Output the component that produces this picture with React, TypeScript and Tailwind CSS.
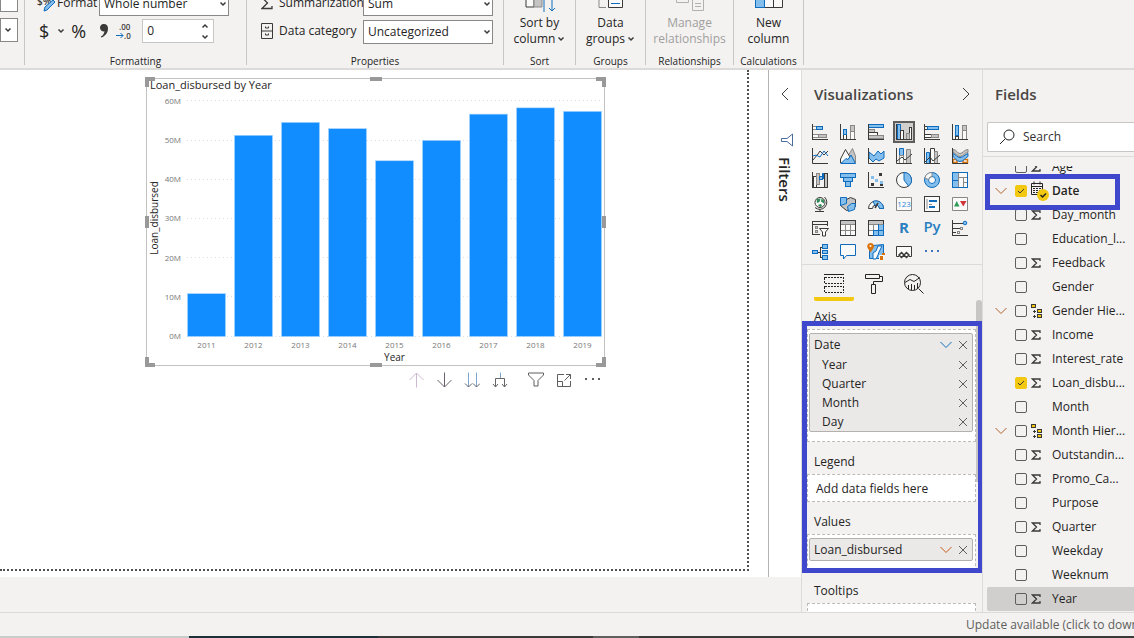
import type { ReactNode } from 'react'
import { clsx } from 'clsx'

const loans = [
  { year: '2011', value: 10.8 },
  { year: '2012', value: 51.2 },
  { year: '2013', value: 54.5 },
  { year: '2014', value: 52.9 },
  { year: '2015', value: 44.7 },
  { year: '2016', value: 49.9 },
  { year: '2017', value: 56.6 },
  { year: '2018', value: 58.2 },
  { year: '2019', value: 57.3 },
]

interface Field {
  name: string
  kind?: 'sum' | 'date' | 'hierarchy'
  checked?: boolean
  active?: boolean
}

const fields: Field[] = [
  { name: 'Age', kind: 'sum' },
  { name: 'Date', kind: 'date', checked: true },
  { name: 'Day_month', kind: 'sum' },
  { name: 'Education_l...' },
  { name: 'Feedback', kind: 'sum' },
  { name: 'Gender' },
  { name: 'Gender Hie...', kind: 'hierarchy' },
  { name: 'Income', kind: 'sum' },
  { name: 'Interest_rate', kind: 'sum' },
  { name: 'Loan_disbu...', kind: 'sum', checked: true },
  { name: 'Month' },
  { name: 'Month Hier...', kind: 'hierarchy' },
  { name: 'Outstandin...', kind: 'sum' },
  { name: 'Promo_Ca...', kind: 'sum' },
  { name: 'Purpose' },
  { name: 'Quarter', kind: 'sum' },
  { name: 'Weekday' },
  { name: 'Weeknum' },
  { name: 'Year', kind: 'sum', active: true },
]

// Icon palette
const K = '#3b3a39'
const G = '#8a8886'
const L = '#c4c4c4'
const B = '#0f6cbd'
const S = '#83beec'
const W = '#fafafa'

const axis = <path d="M.5 0V15.5H16" stroke={K} />

const visuals: { name: string; icon: ReactNode; smooth?: boolean }[] = [
  { name: 'Stacked bar chart', icon: <><path d="M1 2.5H5.5V5.5H1M1 10.5H6.5V13.5H1" fill={W} stroke={G} /><path d="M4.5 2.5h6v3h-6z" fill={S} stroke={B} /><path d="M6.5 10.5h8v3h-8z" fill={L} stroke={G} />{axis}</> },
  { name: 'Stacked column chart', icon: <><path d="M3.5 10.5h3v5h-3z" fill={W} stroke={K} /><path d="M3.5 5.5h3v5h-3z" fill={S} stroke={B} /><path d="M10.5 1.5h4v6h-4z" fill={L} stroke={G} /><path d="M10.5 7.5h4v8h-4z" fill={W} stroke={G} />{axis}</> },
  { name: 'Clustered bar chart', icon: <><path d="M.5.5h15v3H.5z" fill={S} stroke={B} /><path d="M.5 5.5h6v3h-6z" fill={L} stroke={G} /><path d="M.5 8.5h9v3h-9z" fill={W} stroke={K} /><path d="M.5 11.5h15v3H.5z" fill={L} stroke={G} />{axis}</> },
  { name: 'Clustered column chart', icon: <><path d="M1.5.5h3v15h-3z" fill={S} stroke={B} /><path d="M4.5 6.5h3v9h-3zM13.5 3.5h2v12h-2z" fill={W} stroke={K} /><path d="M10.5 9.5h3v6h-3z" fill={L} stroke={G} />{axis}</> },
  { name: '100% stacked bar chart', icon: <><path d="M.5 2.5h4v3h-4zM.5 10.5h7v3h-7z" fill={W} stroke={K} /><path d="M3.5 2.5h11v3h-11z" fill={S} stroke={B} /><path d="M7.5 10.5h7v3h-7z" fill={L} stroke={G} />{axis}</> },
  { name: '100% stacked column chart', icon: <><path d="M3.5 12.5h3v3h-3z" fill={W} stroke={K} /><path d="M3.5 1.5h3v10h-3z" fill={S} stroke={B} /><path d="M10.5 1.5h4v5h-4z" fill={L} stroke={G} /><path d="M10.5 6.5h4v9h-4z" fill={W} stroke={G} />{axis}</> },
  { name: 'Line chart', smooth: true, icon: <><path d="M1 12l5-6 2-3 4 4 4-4" stroke={K} /><path d="M1 8l3-1 4 2 4-6 4 5" stroke={B} />{axis}</> },
  { name: 'Area chart', smooth: true, icon: <><path d="M8 8l4.500-7.500L15.500 8v7L10 9z" fill={L} stroke={G} /><path d="M.5 11l5-9.500L10 9l-4 6H.5z" fill={W} stroke={K} /><path d="M1 15.500l5-5 2 1 3-4.500 4.500 8.500z" fill={S} stroke={B} /></> },
  { name: 'Stacked area chart', smooth: true, icon: <><path d="M1 4l5 4 4-5 3 3 3-3v7l-5 3-3-2-3 3-4-4z" fill={S} stroke={B} />{axis}</> },
  { name: 'Line and stacked column chart', smooth: true, icon: <><path d="M3.500.500h4v7h-4z" fill={S} stroke={B} /><path d="M3.500 7.500h4v8h-4z" fill={W} stroke={G} /><path d="M10.500 1.500h4v14h-4z" fill={L} stroke={G} /><path d="M1 13l5-4 3 3 7-6" stroke={K} />{axis}</> },
  { name: 'Line and clustered column chart', smooth: true, icon: <><path d="M2.500 4.500h3v11h-3z" fill={S} stroke={B} /><path d="M6.500.5h4v15h-4z" fill={W} stroke={K} /><path d="M10.500 3.500h3v12h-3z" fill={L} stroke={G} /><path d="M1 14l5-5 3 4 7-6" stroke={K} />{axis}</> },
  { name: 'Ribbon chart', smooth: true, icon: <><path d="M1 11.500h4v3H1zM1 7.500h3M12 7.500h4M11 11.500h4.500v3H11z" fill={W} stroke="#d8730c" strokeWidth="1.500" /><path d="M1 1.500c4 0 4 4 7 4s4-4 8-4v3c-4 0-4 4-8 4s-4-4-7-4z" fill={L} stroke={G} /><path d="M1 5.500c3 1 4 4 7 4s5-3 8-4v3c-3 1-4 5-8 5s-5-4-7-5z" fill={S} stroke={B} />{axis}</> },
  { name: 'Waterfall chart', icon: <><path d="M1.500 4.500h3v11h-3z" fill={W} stroke={K} /><path d="M4.500 1.500h3v11h-3z" fill={L} stroke={G} /><path d="M7.500 4.500h3v3h-3z" fill={S} stroke={B} /><path d="M10.500 1.500h2v5h-2z" fill={B} stroke={B} /><path d="M12.500 1.500h3v14h-3z" fill={L} stroke={K} />{axis}</> },
  { name: 'Funnel', icon: <><path d="M.5 1.500h15v4H.5zM3.500 5.500h9v4h-9zM5.500 9.500h5v5h-5z" fill={S} stroke={B} /></> },
  { name: 'Scatter chart', icon: <>{axis}<path d="M3 4h3v3H3zM7 7h3v3H7zM12 9h3v3h-3z" fill={S} /><path d="M11 1h3v3h-3zM3 11h3v3H3zM12 12h3v2h-3z" fill={K} /></> },
  { name: 'Pie chart', smooth: true, icon: <><circle cx="8" cy="8" r="7.500" fill={W} stroke={K} /><path d="M8 .5A7.500 7.500 0 0 1 12.500 14L8 8z" fill={S} stroke={B} /></> },
  { name: 'Donut chart', smooth: true, icon: <><circle cx="8" cy="8" r="5.500" stroke={S} strokeWidth="4" /><circle cx="8" cy="8" r="7.500" stroke={B} /><circle cx="8" cy="8" r="3.500" fill={W} stroke={B} /><path d="M.8 6A7.500 7.500 0 0 1 8 .5v4A3.500 3.500 0 0 0 4.600 7.500z" fill={W} stroke={G} /></> },
  { name: 'Treemap', icon: <><path d="M.5.5h6v15h-6zM.5 8.500h6" fill={S} stroke={B} /><path d="M6.500.5h9v5h-9zM6.500 5.500h5v10h-5zM11.500 5.500h4v5h-4zM11.500 10.500h4v5h-4z" fill={W} stroke={G} /><path d="M.5.5h15v15H.5z" stroke={B} /></> },
  { name: 'Map', smooth: true, icon: <><circle cx="8" cy="6.500" r="5" fill={W} stroke={K} /><path d="M4.500 3l4-.5-1 3.500-2.500 1zM9.500 2.500l2.500 2v3l-3-2zM6 9l3-1 1 2-2 1z" fill="#2e8b57" /><path d="M12.500 1a7 7 0 0 1-9.500 10.500M8 13v2M3 15.500h9" stroke={K} /></> },
  { name: 'Filled map', smooth: true, icon: <><path d="M.5 2.500l6 1 4-2 5 2v7l-4 3-5 1-6-5z" fill={L} stroke={K} /><path d="M.5 1.500h6v6l-6 2zM7.500 10.500l4-3h4l-1 6-6 2z" fill={S} stroke={B} /></> },
  { name: 'Gauge', smooth: true, icon: <><path d="M.5 12.500a7.500 7.500 0 0 1 15 0h-4a3.500 3.500 0 0 0-7 0z" fill={W} stroke={K} /><path d="M5 5.500a7.500 7.500 0 0 1 10.500 7h-4A3.500 3.500 0 0 0 7 9.300z" fill={S} stroke={B} /><path d="M10 7l-3 5" stroke={K} strokeWidth="1.500" /></> },
  { name: 'Card', smooth: true, icon: <><path d="M.5 1.500h15v13H.5z" fill={W} stroke={G} /><text x="8" y="11" fontSize="8" textAnchor="middle" fill="#2b88d8" stroke="none">123</text></> },
  { name: 'Multi-row card', icon: <><path d="M.5.500h15v15H.5z" fill={W} stroke={K} /><path d="M3 3v10" stroke={L} strokeWidth="2" /><path d="M5 5h8M5 11h6" stroke={B} strokeWidth="2" /><path d="M5 8.500h3" stroke={G} /></> },
  { name: 'KPI', smooth: true, icon: <><path d="M.5 1.500h15v13H.5z" fill={W} stroke={G} /><path d="M2 10.500L4.800 5l2.700 5.500z" fill="#2e9b57" /><path d="M8 5h6.500l-3.200 5.500z" fill="#d13438" /></> },
  { name: 'Slicer', icon: <><path d="M8 14.500H.5v-13h15V6M1 4.500h14" stroke={K} /><path d="M3.500 6.500h2v2h-2zM3.500 10.500h2v2h-2z" fill={L} stroke={G} /><path d="M7.500 8.500h9l-3 3.500v4h-3v-4z" fill={W} stroke={K} shapeRendering="auto" /></> },
  { name: 'Table', icon: <><path d="M.5.500h15v15H.5z" fill={W} stroke={K} /><path d="M1 4.500h14M1 10.500h14M5.500 4v11M10.500 4v11" stroke={G} /><path d="M1 2.500h14" stroke={L} strokeWidth="3" /></> },
  { name: 'Matrix', icon: <><path d="M.5.500h15v15H.5z" fill={W} stroke={K} /><path d="M10.500 4.500h5v11h-10v-5h5z" fill={S} stroke={B} /><path d="M1 2.500h14" stroke={L} strokeWidth="3" /><path d="M1 4.500h14M1 10.500h5M5.500 4v6" stroke={G} /><path d="M10.500 4v11M5 10.500h10" stroke={B} /></> },
  { name: 'R script visual', smooth: true, icon: <text x="8" y="13" fontSize="15" fontWeight="700" textAnchor="middle" fill="#2a7fc0" stroke="none">R</text> },
  { name: 'Python visual', smooth: true, icon: <text x="8" y="12" fontSize="15" fontWeight="600" textAnchor="middle" fill="#2a7fc0" stroke="none">Py</text> },
  { name: 'Key influencers', icon: <>{axis}<path d="M1 3.500h10M1 8.500h7M1 12.500h3" stroke={K} /><circle cx="13" cy="3" r="1.800" fill={S} stroke={B} shapeRendering="auto" /><path d="M8.500 7.500h2v2h-2zM5 11.500h2v2H5z" stroke={G} /></> },
  { name: 'Decomposition tree', icon: <><path d="M5.500 8H8M10.500 3H8v10h3" stroke={K} /><path d="M.5 6.500h5v3h-5zM10.500.5h5v4h-5zM10.500 6.500h5v3h-5zM10.500 11.500h5v4h-5z" fill={S} stroke={B} /></> },
  { name: 'Q&A', smooth: true, icon: <path d="M.5.500h15v11h-9l-3 3.500v-3.500h-3z" fill={W} stroke={B} /> },
  { name: 'ArcGIS map', smooth: true, icon: <><path d="M1.500 5.500l4-4 10-1v14H1.500z" fill={S} stroke={B} /><path d="M5 15V9l3-2 2-5h4l-3 6-1 3-2 4z" fill={W} stroke={B} /><path d="M2.500-1A3.300 3.300 0 0 0 0 4.500L2.500 8.500 5.200 4.500A3.300 3.300 0 0 0 2.500-1z" fill="#d8730c" /><circle cx="2.500" cy="2" r="1" fill={W} /><path d="M11 11h5v5h-5z" fill={W} /><path d="M12 12h3v4h-3zM14 9h3v2h-3z" fill="#d8730c" /></> },
  { name: 'Power Apps', smooth: true, icon: <><path d="M3 12.500H.5v-10h15v10H13" fill={W} stroke={K} /><path d="M3 11l2.500-2.500L8 11l-2.500 2.500zM8 11l2.500-2.500L13 11l-2.500 2.500z" fill={W} stroke={K} strokeWidth="1.500" /></> },
  { name: 'Get more visuals', icon: <><path d="M1 6h2v2H1zM7 6h2v2H7zM13 6h2v2h-2z" fill="#3d76b8" /></> },
]

function Chevron({ up, className }: { up?: boolean; className?: string }) {
  return (
    <svg viewBox="0 0 8 8" className={clsx('w-2 h-2 shrink-0', className)} fill="none" stroke={K} strokeWidth="1.500">
      <path d={up ? 'M1.500 5.500L4 3l2.500 2.500' : 'M1.500 2.500L4 5l2.500-2.500'} />
    </svg>
  )
}

function WideChevron({ color = '#605e5c' }: { color?: string }) {
  return (
    <svg viewBox="0 0 12 8" className="w-3 h-2" fill="none" stroke={color}>
      <path d="M.5 1l5.500 5.500L11.500 1" />
    </svg>
  )
}

function RibbonSelect({ id, value, plain, className }: { id: string; value: string; plain?: boolean; className: string }) {
  return (
    <div className={clsx('relative shrink-0', className)}>
      <select id={id} aria-label={id} className="appearance-none w-full h-6 border border-[#8a8886] bg-white pl-1 pr-3 text-xs text-[#252423]">
        <option>{value}</option>
      </select>
      {!plain && <Chevron className="absolute right-0.5 top-2.5 pointer-events-none" />}
    </div>
  )
}

function RibbonGroup({ label, className, children }: { label: string; className: string; children: ReactNode }) {
  return (
    <div className={clsx('shrink-0 flex flex-col justify-end border-r border-[#c8c6c4]', className)}>
      {children}
      <p className="text-[10px] leading-4 text-center -mb-1 whitespace-nowrap">{label}</p>
    </div>
  )
}

function BigButton({ lines, icon, menu, disabled }: { lines: string[]; icon: ReactNode; menu?: boolean; disabled?: boolean }) {
  return (
    <button disabled={disabled} className={clsx('flex flex-col items-center text-xs leading-4 mb-1.5 whitespace-nowrap', disabled && 'text-[#a19f9d]')}>
      <svg viewBox="0 0 32 24" className="w-8 h-6 mb-0.5" fill="none">{icon}</svg>
      <span>{lines[0]}</span>
      <span className="flex items-center gap-0.5">{lines[1]}{menu && <Chevron />}</span>
    </button>
  )
}

function Ribbon() {
  return (
    <header className="h-[70px] shrink-0 flex overflow-hidden bg-[#f3f2f1] border-b-2 border-[#dcdbda] pb-[3px]">
      <div className="w-[25px] shrink-0 flex flex-col justify-end gap-1 border-r border-[#c8c6c4] pb-[23px]">
        <RibbonSelect id="Home table" value="" plain className="w-3.5" />
        <RibbonSelect id="Data type" value="" className="w-3.5" />
      </div>
      <RibbonGroup label="Formatting" className="w-[222px]">
        <div className="flex items-center h-6 mb-1 pl-3">
          <svg viewBox="0 0 18 18" className="w-4.5 h-4.5 mr-0.5" fill="none">
            <text x="0" y="11" fontSize="10" fontWeight="600" fill={K}>$%</text>
            <path d="M7 17l1-4 8-7 2 2-8 8z" fill={S} stroke={B} />
          </svg>
          <label htmlFor="Format" className="text-xs w-[42px]">Format</label>
          <RibbonSelect id="Format" value="Whole number" className="w-[130px]" />
        </div>
        <div className="flex items-center h-6 mb-2.5 pl-3.5">
          <button className="flex items-center text-lg leading-6 gap-2"><span>$</span><Chevron /></button>
          <button className="text-lg leading-6 ml-1.5">%</button>
          <button aria-label="Thousands separator" className="ml-3.5 mr-2">
            <svg viewBox="0 0 8 14" className="w-2 h-3.5"><path d="M4 0a3.700 3.700 0 1 0 .5 7.300C4 10 3 11.500.8 12.600l.6 1C5.500 12 8 8.500 8 4.500 8 1.500 6.500 0 4 0z" fill={K} /></svg>
          </button>
          <button aria-label="Decimal places" className="mr-2.5">
            <svg viewBox="0 0 16 18" className="w-4 h-4.5" fill="none">
              <text x="3" y="8" fontSize="8" fontWeight="600" fill={K}>.00</text>
              <text x="8" y="17" fontSize="8" fontWeight="600" fill={K}>.0</text>
              <path d="M0 13.500h7M4.500 11L7 13.500 4.500 16" stroke={B} />
            </svg>
          </button>
          <div className="flex w-[72px] h-6 border border-[#c8c6c4] bg-white">
            <input aria-label="Decimals" defaultValue="0" className="min-w-0 flex-1 pl-1 text-xs outline-none" />
            <div className="flex flex-col justify-around pr-1">
              <button aria-label="Increase"><Chevron up /></button>
              <button aria-label="Decrease"><Chevron /></button>
            </div>
          </div>
        </div>
      </RibbonGroup>
      <RibbonGroup label="Properties" className="w-[257px]">
        <div className="flex items-center h-6 mb-1 pl-3.5">
          <svg viewBox="0 0 12 14" className="w-3 h-3.5 mr-1.5" fill="none" stroke={K} strokeWidth="1.300"><path d="M11 4V1.500H1L6.500 7 1 12.500h10V10" /></svg>
          <label htmlFor="Summarization" className="text-xs w-[84px]">Summarization</label>
          <RibbonSelect id="Summarization" value="Sum" className="w-[130px]" />
        </div>
        <div className="flex items-center h-6 mb-2.5 pl-3.5">
          <svg viewBox="0 0 12 16" className="w-3 h-4 mr-1.5" fill="none" stroke={K}><path d="M.5.500h11v15H.5zM.5 8h11M4.500 3.500v1.500h3V3.500M4.500 10.500V12h3v-1.500" /></svg>
          <label htmlFor="Data category" className="text-xs w-[84px] whitespace-nowrap">Data category</label>
          <RibbonSelect id="Data category" value="Uncategorized" className="w-[130px]" />
        </div>
      </RibbonGroup>
      <RibbonGroup label="Sort" className="w-[72px]">
        <BigButton menu lines={['Sort by', 'column']} icon={<><path d="M2 0h8v18H2z" fill={W} stroke={K} /><path d="M10 0h8v18h-8z" fill={L} stroke={G} /><path d="M20 0v23M28 0v22M25 19l3 3 3-3" stroke={B} /></>} />
      </RibbonGroup>
      <RibbonGroup label="Groups" className="w-[70px]">
        <BigButton menu lines={['Data', 'groups']} icon={<><path d="M6 8H4v10.500h7" stroke={G} /><path d="M13.500 4h14v14.500h-14z" fill={W} stroke={K} /><path d="M16 14.500h9" stroke={B} /></>} />
      </RibbonGroup>
      <RibbonGroup label="Relationships" className="w-[88px]">
        <BigButton disabled lines={['Manage', 'relationships']} icon={<><path d="M2.500 0v13.500h12V0M18.500 9.500h11v12h-11zM21 14.500h6M21 17.500h6" stroke="#b3b0ad" /></>} />
      </RibbonGroup>
      <RibbonGroup label="Calculations" className="w-[70px]">
        <BigButton lines={['New', 'column']} icon={<><path d="M2.500 0h27v18.500h-27zM2.500 9.500h27M20.500 0v18" fill={W} stroke={K} /><path d="M2.500 0h9v18.500h-9z" fill={S} stroke={B} /></>} />
      </RibbonGroup>
    </header>
  )
}

function LoanChart() {
  const base = 259
  const scale = 3.92
  return (
    <svg viewBox="0 0 461 290" className="w-[461px] h-[290px]" fill="none">
      <rect x="1.500" y="1.500" width="458" height="287" stroke="#c2c2c2" />
      {[0, 10, 20, 30, 40, 50, 60].map(tick => (
        <g key={tick}>
          <path d={`M42 ${Math.floor(base - tick * scale) + 0.5}H458`} stroke="#dedede" strokeDasharray="1 3" />
          <text x="36" y={base - tick * scale + 3} fontSize="8" textAnchor="end" fill="#777">{tick}M</text>
        </g>
      ))}
      {loans.map((l, i) => (
        <g key={l.year}>
          <rect x={42.5 + i * 47} y={base - l.value * scale} width="38" height={l.value * scale + 0.5} fill="#118dff" stroke="#a9d5ff" strokeWidth=".6" />
          <text x={61.5 + i * 47} y="271" fontSize="8" textAnchor="middle" fill="#777">{l.year}</text>
        </g>
      ))}
      <text x="5" y="12" fontSize="11" fill="#252423">Loan_disbursed by Year</text>
      <text x="249.500" y="284" fontSize="10" textAnchor="middle" fill="#252423">Year</text>
      <text transform="translate(13 141) rotate(-90)" fontSize="10" textAnchor="middle" fill="#252423">Loan_disbursed</text>
      <path d="M0 0h10v4H4v6H0zM225 0h12v4h-12zM451 0h10v10h-4V4h-6zM0 139h4v12H0zM457 139h4v12h-4zM0 290v-10h4v6h6v4zM225 286h12v4h-12zM461 290h-10v-4h6v-6h4z" fill="#999" />
    </svg>
  )
}

const drillActions: { name: string; icon: ReactNode; className?: string }[] = [
  { name: 'Drill up', icon: <path d="M8.500 15.500V1M1.500 8l7-7 7 7" stroke="#cbb9cf" /> },
  { name: 'Drill down', icon: <path d="M8.500.5V15M1.500 8l7 7 7-7" stroke="#6b5f70" /> },
  { name: 'Go to next level', icon: <><path d="M4.500.5V15M12.500.5V15" stroke="#78a5cf" /><path d="M1 11.500l3.500 3.500L8 11.500M9 11.500l3.500 3.500 3.500-3.500" stroke="#666" /></> },
  { name: 'Expand all down', icon: <><path d="M8.500.5V6" stroke="#78a5cf" /><path d="M3.500 15V6.500h9V15M1 12l2.500 3L6 12M10 12l2.500 3 2.500-3" stroke="#666" /></> },
  { name: 'Filters', className: 'ml-2', icon: <path d="M.5 1h15v2L10 8.500V14H6V8.500L.5 3z" stroke="#605e5c" /> },
  { name: 'Focus mode', icon: <path d="M8 2.500H1.500v12h13V9M1.500 9.500h5v5M8.500 8.500l6-6M10 2.500h4.500V7" stroke="#605e5c" /> },
  { name: 'More options', icon: <path d="M1 6h2v2H1zM8 6h2v2H8zM14 6h2v2h-2z" fill="#605e5c" /> },
]

function Canvas() {
  return (
    <main className="flex-1 min-w-0 flex flex-col bg-white pr-[19px] pb-1.5">
      <div className="relative flex-1 border-r-2 border-b-2 border-dotted border-[#505050]">
        <div className="absolute left-[145px] top-[7px]">
          <LoanChart />
          <div className="flex justify-end mt-[3px]">
            {drillActions.map(a => (
              <button key={a.name} aria-label={a.name} className={clsx('w-7 h-5 flex items-center justify-center', a.className)}>
                <svg viewBox="0 0 16 16" className="w-4 h-4" fill="none">{a.icon}</svg>
              </button>
            ))}
          </div>
        </div>
      </div>
    </main>
  )
}

function FiltersPane() {
  return (
    <aside className="w-[33px] shrink-0 flex flex-col items-center bg-white border-l border-[#b3b3b3] pt-[17px]">
      <button aria-label="Expand filters">
        <svg viewBox="0 0 8 14" className="w-2 h-3.5" fill="none" stroke={K}><path d="M7 1L1 7l6 6" /></svg>
      </button>
      <svg viewBox="0 0 12 14" className="w-3 h-3.5 mt-8 ml-1" fill="none" stroke="#4a6c9a"><path d="M11.500 1v12L6 8.500H.5v-3H6z" /></svg>
      <h2 className="[writing-mode:vertical-rl] mt-2.5 text-[15px] leading-5 font-semibold text-[#252423]">Filters</h2>
    </aside>
  )
}

function RemoveIcon() {
  return (
    <svg viewBox="0 0 10 10" className="w-2.5 h-2.5" fill="none" stroke="#605e5c"><path d="M1 1l8 8M9 1L1 9" /></svg>
  )
}

function WellCard({ name, color, children }: { name: string; color: string; children?: ReactNode }) {
  return (
    <div className="border border-[#b3b0ad] rounded-xs bg-[#eae9e8]">
      <div className="flex items-center h-[21px] pl-1 pr-1">
        <span className="flex-1">{name}</span>
        <button aria-label={`${name} options`} className="mr-1.5"><WideChevron color={color} /></button>
        <button aria-label={`Remove ${name}`}><RemoveIcon /></button>
      </div>
      {children}
    </div>
  )
}

function Well({ label, filled, children }: { label: string; filled?: boolean; children?: ReactNode }) {
  return (
    <section className="shrink-0">
      <h3 className="h-8 mx-1.5 pl-1.5 pt-2 leading-6">{label}</h3>
      <div className={clsx('bg-white border border-dashed border-[#bdbbb9] ml-[5px] mr-1.5', filled ? 'pl-px pr-0.5 pt-[3px] pb-[9px]' : 'h-7')}>
        {children}
      </div>
    </section>
  )
}

function VisualizationsPane() {
  return (
    <aside className="relative w-[181px] shrink-0 flex flex-col overflow-hidden border-l border-[#dcdbda] text-xs">
      <div className="flex items-center justify-between px-3 h-12 shrink-0">
        <h2 className="text-[15px] font-semibold text-[#484644]">Visualizations</h2>
        <button aria-label="Collapse"><svg viewBox="0 0 8 14" className="w-2 h-3.5" fill="none" stroke={K}><path d="M1 1l6 6-6 6" /></svg></button>
      </div>
      <div className="grid grid-cols-6 mt-0.5 pl-1 pr-2 border-b border-[#dcdbda]">
        {visuals.map((v, i) => (
          <div key={v.name} className="h-6 flex items-center justify-center">
            <button aria-label={v.name} className={clsx('w-[22px] h-[22px] flex items-center justify-center', i === 3 && 'bg-[#d0cfce] border-2 border-[#605e5c]')}>
              <svg viewBox="0 0 16 16" className="w-4 h-4 overflow-visible shrink-0" fill="none" shapeRendering={v.smooth ? 'auto' : 'crispEdges'}>{v.icon}</svg>
            </button>
          </div>
        ))}
      </div>
      <div className="flex pl-3 h-9 shrink-0">
        <button aria-label="Fields" className="w-10 flex flex-col items-center border-b-4 border-[#f2c811] pt-[9px] rounded-xs">
          <svg viewBox="0 0 20 20" className="w-5 h-5" fill="none" stroke="#252423" shapeRendering="crispEdges"><path d="M0 .5h20" /><path d="M.5 3.500h19v6H.5zM.5 12.500h19v6H.5z" strokeDasharray="2 1" /></svg>
        </button>
        <button aria-label="Format" className="w-10 flex justify-center pt-[9px]">
          <svg viewBox="0 0 20 20" className="w-5 h-5" fill="none" stroke="#252423"><path d="M1.500.5h14v4h-14zM15.500 2.500h3v5h-9v3M7.500 10.500h4v9h-4z" /></svg>
        </button>
        <button aria-label="Analytics" className="w-10 flex justify-center pt-[9px]">
          <svg viewBox="0 0 20 20" className="w-5 h-5" fill="none" stroke="#252423"><circle cx="8.500" cy="8.500" r="8" /><path d="M14.500 14.500l5 5M1 8.500l5-3 4 2 6-4M4.500 15v-4M7.500 16v-6M10.500 16v-5M13.500 14V9" /></svg>
        </button>
      </div>
      <div className="flex-1 min-h-0 flex flex-col overflow-hidden">
        <div className="-mt-1">
          <Well label="Axis" filled>
            <WellCard name="Date" color="#0f6cbd">
              <ul>
                {['Year', 'Quarter', 'Month', 'Day'].map(level => (
                  <li key={level} className="flex items-center justify-between h-[19px] pl-3 pr-1">
                    {level}
                    <button aria-label={`Remove ${level}`}><RemoveIcon /></button>
                  </li>
                ))}
              </ul>
            </WellCard>
          </Well>
          <Well label="Legend"><p className="pl-2 leading-7">Add data fields here</p></Well>
          <Well label="Values" filled><WellCard name="Loan_disbursed" color="#c65a11" /></Well>
          <Well label="Tooltips" />
        </div>
      </div>
      <div className="absolute right-0 top-[230px] w-1.5 h-[182px] rounded-t bg-[#c8c6c4]" />
      <div className="absolute left-0 -right-px top-[251px] h-[252px] border-[5px] border-[#3f48cc] pointer-events-none" />
    </aside>
  )
}

function FieldIcon({ kind }: { kind?: Field['kind'] }) {
  if (kind === 'sum') {
    return <svg viewBox="0 0 10 10" className="w-2.5 h-2.5" fill="none" stroke={K} strokeWidth="1.300"><path d="M9 3V1H1.500L5.500 5l-4 4H9V7" /></svg>
  }
  if (kind === 'hierarchy') {
    return (
      <svg viewBox="0 0 12 14" className="w-3 h-3.5" fill="#f2c811" stroke={K} shapeRendering="crispEdges">
        <path d="M.5.5h4v3h-4zM6.500 5.500h4v3h-4zM6.500 10.500h4v3h-4z" />
        <path d="M2 7h3M3.500 5.500v3M2 12h3M3.500 10.500v3" />
      </svg>
    )
  }
  if (kind === 'date') {
    return (
      <svg viewBox="0 0 18 20" className="w-4.5 h-5" fill="none" stroke="#252423">
        <path d="M.5 2.500h11v11H.5zM.5 5.500h11M3 .5v3M9 .5v3" />
        <path d="M2 7.500h8M2 9.500h8M2 11.500h8" strokeDasharray="2 1" />
        <circle cx="12" cy="14" r="6" fill="#f2c811" stroke="none" />
        <path d="M9.500 14l2 2 3.500-3.500" strokeWidth="1.500" />
      </svg>
    )
  }
  return null
}

function FieldRow({ field }: { field: Field }) {
  const expandable = field.kind === 'date' || field.kind === 'hierarchy'
  return (
    <li className={clsx('h-6 shrink-0 flex items-center rounded-l-xs', field.active && 'bg-[#d0cfcd]')}>
      <span className="w-7 flex justify-center">
        {expandable && <button aria-label={`Collapse ${field.name}`}><WideChevron color="#b0622f" /></button>}
      </span>
      <label className="flex items-center">
        <span className="relative flex">
          <input
            type="checkbox"
            defaultChecked={field.checked}
            className="appearance-none w-3 h-3 rounded-xs border border-[#605e5c] checked:border-[#f2c811] checked:bg-[#f2c811]"
          />
          {field.checked && (
            <svg viewBox="0 0 12 12" className="absolute inset-0 w-3 h-3 pointer-events-none" fill="none" stroke={K}><path d="M3 6l2 2 4-4" /></svg>
          )}
        </span>
        <span className="w-5 ml-1 flex"><FieldIcon kind={field.kind} /></span>
        <span className={clsx('ml-px whitespace-nowrap', field.kind === 'date' && 'font-semibold')}>{field.name}</span>
      </label>
    </li>
  )
}

function FieldsPane() {
  return (
    <aside className="relative w-[152px] shrink-0 flex flex-col overflow-hidden border-l border-[#dcdbda] text-xs">
      <h2 className="h-12 shrink-0 pl-3 flex items-center text-[15px] font-semibold text-[#484644]">Fields</h2>
      <div className="pl-1 pt-1 pb-1 border-b border-[#dcdbda]">
        <div className="flex items-center h-[30px] border border-r-0 border-[#c8c6c4] rounded-l-xs bg-white pl-[11px]">
          <svg viewBox="0 0 16 16" className="w-4 h-4 mr-2" fill="none" stroke="#252423"><circle cx="10" cy="6" r="5" /><path d="M6.500 9.500L1 15" /></svg>
          <input aria-label="Search fields" placeholder="Search" className="min-w-0 flex-1 outline-none placeholder:text-[#323130]" />
        </div>
      </div>
      <ul className="flex-1 min-h-0 mt-[9px] flex flex-col justify-end overflow-hidden pl-1 pb-px">
        {fields.map(f => <FieldRow key={f.name} field={f} />)}
      </ul>
      <div className="absolute left-0.5 top-[104px] w-[135px] h-9 border-[5px] border-[#3f48cc] pointer-events-none" />
    </aside>
  )
}

export default function App() {
  return (
    <div className="h-screen flex flex-col overflow-hidden bg-[#f3f2f1] text-[#252423] font-['Open_Sans',sans-serif]">
      <Ribbon />
      <div className="flex-1 min-h-0 flex">
        <div className="flex-1 min-w-0 flex flex-col">
          <div className="flex-1 min-h-0 flex">
            <Canvas />
            <FiltersPane />
          </div>
          <div className="h-[35px] shrink-0" />
        </div>
        <VisualizationsPane />
        <FieldsPane />
      </div>
      <footer className="h-6 shrink-0 flex justify-end border-t border-[#dcdbda]">
        <p className="w-[168px] overflow-hidden whitespace-nowrap text-xs leading-6 text-[#605e5c]">Update available (click to download)</p>
      </footer>
      <div className="h-0.5 shrink-0 flex bg-[#3a3a3a]">
        <div className="w-1/6 bg-[#c8cccb]" />
        <div className="w-1/6 bg-[#1a3238] mr-[19%]" />
        <div className="w-[4%] bg-[#5f5f5f]" />
      </div>
    </div>
  )
}
